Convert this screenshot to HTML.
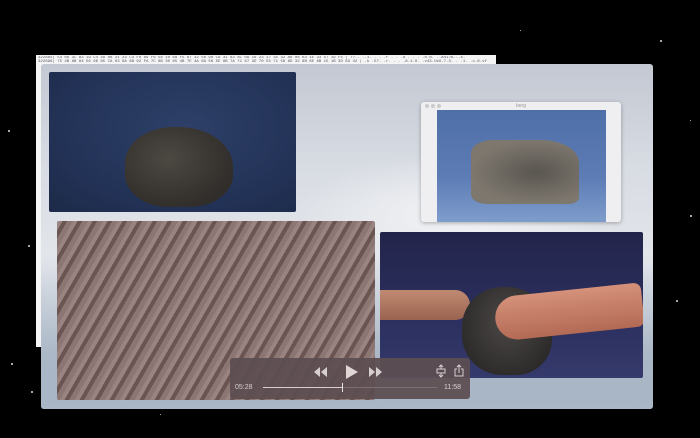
<!DOCTYPE html>
<html><head><style>
*{margin:0;padding:0;box-sizing:border-box}
body{width:700px;height:438px;background:#000;position:relative;overflow:hidden;font-family:"Liberation Sans",sans-serif}
.a{position:absolute}
.star{position:absolute;width:2px;height:2px;background:#ddd;border-radius:50%}
</style></head><body>
<div class="star" style="left:28px;top:245px"></div>
<div class="star" style="left:11px;top:363px"></div>
<div class="star" style="left:31px;top:391px"></div>
<div class="star" style="left:8px;top:130px"></div>
<div class="star" style="left:690px;top:215px"></div>
<div class="star" style="left:676px;top:300px"></div>
<div class="star" style="left:660px;top:40px"></div>
<div class="star" style="left:160px;top:414px;width:1px;height:1px"></div>
<div class="star" style="left:520px;top:30px;width:1px;height:1px"></div>
<div class="star" style="left:690px;top:120px;width:1px;height:1px"></div>
<div class="a" style="left:36px;top:55px;width:460px;height:292px;background:#f4f4f4"></div>
<div class="a" style="left:38px;top:56px;width:456px;height:8px;font:4px 'Liberation Mono',monospace;color:#556;line-height:4px;white-space:nowrap;overflow:hidden">322884| 54 66 3C 83 19 C4 49 88 21 23 C4 F0 89 F6 58 10 68 F5 87 32 56 90 C9 31 83 8C 0A 16 23 17 35 32 A6 08 A4 1E 33 57 19 F5 | T?.. ..1. . . .F . . .A . . . .0.N. ..A41?A...k.<br>322896| 75 4B 8B 84 56 66 85 CA 63 8A 8B 92 FA 7C 8B 30 85 4B 7E 4A 6A 56 5E 8B 7A 71 67 3D 70 55 71 58 6D 32 8B 6E 8B 15 1B 3D 83 42 | .k .57. .r. . . .8.1.0. .v43.UeX.7.3. . .1. .c.8.vf</div>
<div class="a" style="left:41px;top:64px;width:612px;height:345px;border-radius:3px;overflow:hidden;background:linear-gradient(180deg,#c3c8d2 0%,#d8dce3 30%,#e2e5ea 55%,#cfd6e0 75%,#aebccb 100%)">
 <div class="a" style="left:250px;top:90px;width:330px;height:120px;background:radial-gradient(ellipse at center,#f2f3f5 0%,rgba(240,241,244,0) 70%)"></div>
 <div class="a" style="left:0;top:200px;width:612px;height:145px;background:linear-gradient(180deg,rgba(160,175,190,0) 0%,rgba(150,165,182,.5) 60%,#a9b7c6 100%)"></div>
</div>
<div class="a" style="left:49px;top:72px;width:247px;height:140px;border-radius:2px;overflow:hidden;background:radial-gradient(ellipse at 55% 40%,#2e4068 0%,#233358 60%,#1d2a48 100%)">
 <div class="a" style="left:76px;top:55px;width:108px;height:80px;background:radial-gradient(ellipse at 40% 40%,#4c4842,#302d2a 75%);border-radius:45% 50% 40% 40%"></div>
</div>
<div class="a" style="left:421px;top:102px;width:200px;height:120px;background:#efeff1;border-radius:3px;box-shadow:0 1px 4px rgba(0,0,0,.3)">
 <div class="a" style="left:4px;top:2px;width:4px;height:4px;border-radius:50%;background:#ccc"></div>
 <div class="a" style="left:10px;top:2px;width:4px;height:4px;border-radius:50%;background:#ccc"></div>
 <div class="a" style="left:16px;top:2px;width:4px;height:4px;border-radius:50%;background:#ccc"></div>
 <div class="a" style="left:0;top:0;width:200px;height:8px;font-size:5px;color:#999;text-align:center;line-height:8px">berg</div>
 <div class="a" style="left:16px;top:8px;width:169px;height:112px;background:linear-gradient(180deg,#4f6fa8 0%,#5d7cb5 60%,#7e9ccb 100%)">
  <div class="a" style="left:34px;top:30px;width:108px;height:64px;background:radial-gradient(ellipse at 60% 50%,#5a5650,#7d776e 70%);border-radius:20% 35% 10% 15%"></div>
 </div>
</div>
<div class="a" style="left:57px;top:221px;width:318px;height:179px;border-radius:2px;background:repeating-linear-gradient(-60deg,#8c7674 0 5px,#6a5553 5px 9px,#9a8482 9px 13px)"></div>
<div class="a" style="left:380px;top:232px;width:263px;height:146px;border-radius:2px;overflow:hidden;background:linear-gradient(180deg,#22244a,#2e3262 70%,#353a6c)">
 <div class="a" style="left:0;top:58px;width:90px;height:30px;background:linear-gradient(180deg,#c08a72,#9a6350);border-radius:0 20px 20px 0"></div>
 <div class="a" style="left:82px;top:55px;width:90px;height:88px;background:radial-gradient(ellipse at 50% 40%,#4b4846,#2b2928 80%);border-radius:45% 50% 40% 45%"></div>
 <div class="a" style="left:115px;top:58px;width:148px;height:44px;background:linear-gradient(180deg,#d5917a,#b36a55);border-radius:30px 10px 10px 30px;transform:rotate(-6deg)"></div>
</div>
<div class="a" style="left:230px;top:358px;width:240px;height:41px;background:rgba(92,78,82,.93);border-radius:3px;color:#d8cfcf">
 <svg class="a" style="left:83px;top:7px" width="70" height="14"><path d="M7 2L1 7L7 12ZM14 2L8 7L14 12Z" fill="#d8cfcf"/><path d="M33 0L33 14L45 7Z" fill="#e0d6d6"/><path d="M56 2L62 7L56 12ZM63 2L69 7L63 12Z" fill="#d8cfcf"/></svg>
 <svg class="a" style="left:205px;top:6px" width="30" height="14"><path d="M2 5H10V9H2ZM6 1V5M6 9V13M4 3L6 1L8 3M4 11L6 13L8 11" stroke="#d8cfcf" fill="none" stroke-width="1"/><path d="M22 5H20V12H28V5H26M24 9V1M22 3L24 1L26 3" stroke="#d8cfcf" fill="none" stroke-width="1"/></svg>
 <div class="a" style="left:5px;top:26px;font-size:7px">05:28</div>
 <div class="a" style="left:214px;top:26px;font-size:7px">11:58</div>
 <div class="a" style="left:33px;top:29px;width:174px;height:1px;background:#7d6e72"></div>
 <div class="a" style="left:33px;top:29px;width:80px;height:1px;background:#d8cfcf"></div>
 <div class="a" style="left:112px;top:25px;width:1px;height:9px;background:#e8e0e0"></div>
</div>
</body></html>
